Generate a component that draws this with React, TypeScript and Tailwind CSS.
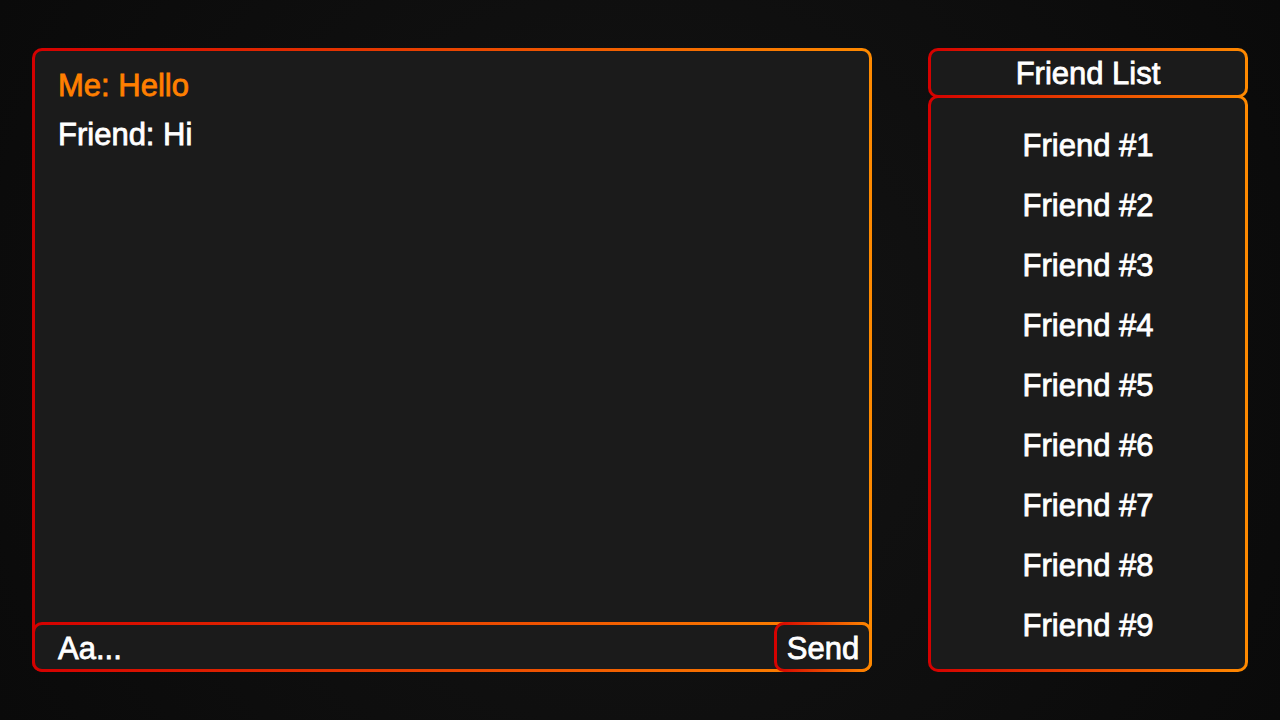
const frame =
  "border-[3px] border-transparent rounded-[10px] [background:linear-gradient(#1b1b1b,#1b1b1b)_padding-box,linear-gradient(to_right,#d40000,#ff8a00)_border-box]";

const friends = [1, 2, 3, 4, 5, 6, 7, 8, 9];

export default function App() {
  return (
    <div className="w-[1280px] h-[720px] flex gap-14 px-8 py-12 bg-[radial-gradient(circle_at_center,#141414,#0a0a0a)] font-['Liberation_Sans',Arial,sans-serif] text-[31px] leading-[36px] text-white [-webkit-text-stroke:0.8px_currentColor]">
      {/* chat */}
      <div className={`w-[840px] flex flex-col ${frame}`}>
        <div className="flex-1 flex flex-col gap-[13px] px-[23px] pt-[17px]">
          <p className="text-[#ff7f00]">Me: Hello</p>
          <p>Friend: Hi</p>
        </div>
        <div className={`-mx-[3px] -mb-[3px] h-[50px] flex ${frame}`}>
          <div className="flex-1 flex items-center px-[23px] pt-[4px]">Aa...</div>
          <button className={`-my-[3px] -mr-[3px] w-[98px] flex items-center justify-center pt-[4px] ${frame}`}>
            Send
          </button>
        </div>
      </div>

      {/* friends */}
      <div className="w-[320px] flex flex-col">
        <div className={`h-[50px] flex items-center justify-center pt-[2px] ${frame}`}>
          Friend List
        </div>
        <div className={`-mt-[3px] flex-1 flex flex-col items-center pt-[18px] ${frame}`}>
          {friends.map((n) => (
            <p key={n} className="h-[60px] flex items-center">
              Friend #{n}
            </p>
          ))}
        </div>
      </div>
    </div>
  );
}
